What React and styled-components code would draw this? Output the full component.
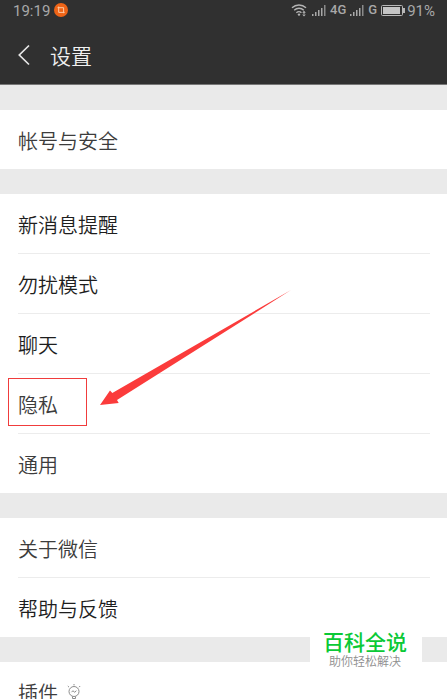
import React from "react";
import styled, { createGlobalStyle } from "styled-components";

const App = () => {
  return (
    <>
      <GlobalStyle />
      <Page>
        <Header>
          <StatusBar>
            <Time>19:19</Time>
            <CropBadge />
            <StatusIcons>
              <WifiIcon />
              <SignalIcon />
              <Network>4G</Network>
              <SignalIcon />
              <Network>G</Network>
              <BatteryIcon />
              <Percent>91%</Percent>
            </StatusIcons>
          </StatusBar>
          <TitleBar>
            <BackButton type="button" aria-label="返回">
              <svg width="12" height="22" viewBox="0 0 12 22" fill="none">
                <path d="M11 1.5L1.3 11L11 20.5" stroke="#e6e6e6" strokeWidth="1.7" />
              </svg>
            </BackButton>
            <h1>设置</h1>
          </TitleBar>
        </Header>

        <Main>
          <Group>
            <Row $tone="soft">
              <a href="#account">帐号与安全</a>
            </Row>
          </Group>
          <Group>
            <Row>
              <a href="#notice">新消息提醒</a>
            </Row>
            <Row>
              <a href="#disturb">勿扰模式</a>
            </Row>
            <Row>
              <a href="#chat">聊天</a>
            </Row>
            <Row $tone="soft">
              <a href="#privacy">隐私</a>
              <Highlight />
              <Pointer width="192" height="118" viewBox="0 0 192 118" aria-hidden="true">
                <path
                  d="M0 115L10 100.5L12.3 103L191 0L17 110L18.7 113Z"
                  fill="#fb3b3b"
                />
              </Pointer>
            </Row>
            <Row $tone="soft">
              <a href="#general">通用</a>
            </Row>
          </Group>
          <Group>
            <Row $tone="soft">
              <a href="#about">关于微信</a>
            </Row>
            <Row>
              <a href="#help">帮助与反馈</a>
            </Row>
          </Group>
          <Group>
            <Row $tone="soft">
              <a href="#plugins">
                插件
                <BulbIcon />
              </a>
            </Row>
          </Group>
        </Main>

        <Watermark>
          <strong>百科全说</strong>
          <span>助你轻松解决</span>
        </Watermark>
      </Page>
    </>
  );
};
export default App;

const CropBadge = () => (
  <svg width="14" height="14" viewBox="0 0 14 14" fill="none" aria-hidden="true">
    <circle cx="7" cy="7" r="7" fill="#ee6417" />
    <path d="M3.5 4.7H9.6V10.2M4.7 3.5V9.4H10.6" stroke="#fbc9a4" />
  </svg>
);

const WifiIcon = () => (
  <svg width="17" height="14" viewBox="0 0 17 14" fill="none" aria-hidden="true">
    <path
      d="M1 4.8C5 1 11 1 15 4.8M3.2 7.3C6 4.6 10 4.6 12.8 7.3M5.4 9.7C7 8.2 9 8.2 10.4 9.7"
      stroke="#b4b4b4"
      strokeWidth="1.4"
    />
    <circle cx="8" cy="11.6" r="1.2" fill="#b4b4b4" />
    <path d="M11.2 9.8L13 7.8L14.8 9.8ZM11.2 11.5L13 13.5L14.8 11.5ZM12.5 9H13.5V12H12.5Z" fill="#b4b4b4" />
  </svg>
);

const SignalIcon = () => (
  <svg width="14" height="12" viewBox="0 -1 14 12" aria-hidden="true">
    <path d="M0 9h1.5v2H0zM3 7h1.5v4H3zM6 5h1.5v6H6zM9 3h1.5v8H9z" fill="#a8a8a8" />
    <path d="M12 0h1.5v11h-1.5z" fill="#8a8a8a" />
  </svg>
);

const BatteryIcon = () => (
  <svg width="24" height="11" viewBox="0 0 24 11" aria-hidden="true">
    <rect x="0.5" y="0.5" width="21" height="10" rx="1" fill="none" stroke="#b8b8b8" />
    <rect x="2" y="2" width="17" height="7" fill="#c4c4c4" />
    <rect x="22" y="3" width="2" height="5" fill="#b8b8b8" />
  </svg>
);

const BulbIcon = () => (
  <svg width="14" height="18" viewBox="0 0 14 18" fill="none" stroke="#8c8c8c" aria-hidden="true">
    <circle cx="7" cy="7.5" r="5" />
    <path d="M4.5 8.2L6 6.7L7.5 8.3L9.4 6.7M5.5 12.5V14.5H8.5V12.5M7 0V1.4M0.8 2L2 3.2M13.2 2L12 3.2" />
  </svg>
);

const GlobalStyle = createGlobalStyle`
  * {
    box-sizing: border-box;
  }
  body {
    margin: 0;
    background: #eaeaea;
    font-family: "Noto Sans CJK SC", sans-serif;
  }
`;

const Page = styled.div`
  position: relative;
  height: 100vh;
  overflow: hidden;
`;

const Header = styled.header`
  background: #303030;
  border-bottom: 1px solid #777777;
`;

const StatusBar = styled.div`
  display: flex;
  align-items: center;
  height: 20px;
  padding: 0 12px 0 13px;
  color: #a8a8a8;
  font-family: Roboto, sans-serif;
  font-size: 15px;
  line-height: 20px;
`;

const Time = styled.span`
  margin-right: 4px;
  padding-top: 2px;
`;

const StatusIcons = styled.div`
  display: flex;
  align-items: center;
  gap: 4px;
  margin-left: auto;
`;

const Network = styled.span`
  font-size: 13px;
  font-weight: 500;
`;

const Percent = styled.span`
  padding-top: 2px;
  margin-left: -2px;
`;

const TitleBar = styled.div`
  display: flex;
  align-items: center;
  gap: 20px;
  height: 64px;
  padding: 6px 18px 0;
  h1 {
    margin: 0;
    color: #f0f0f0;
    font-size: 21px;
    font-weight: 350;
    line-height: 30px;
  }
`;

const BackButton = styled.button`
  display: flex;
  padding: 0;
  border: 0;
  background: transparent;
`;

const Main = styled.main`
  display: flex;
  flex-direction: column;
  gap: 25px;
  padding-top: 25px;
`;

const Group = styled.ul`
  margin: 0;
  padding: 0 17px 0 18px;
  background: #ffffff;
  list-style: none;
`;

const Row = styled.li`
  position: relative;
  a {
    display: flex;
    align-items: center;
    gap: 9px;
    height: 59px;
    padding-top: 2px;
    color: ${({ $tone }) => ($tone === "soft" ? "#3c3c3c" : "#1e1e1e")};
    font-size: 20px;
    font-weight: 350;
    line-height: 30px;
    text-decoration: none;
  }
  & + & {
    border-top: 1px solid #ececec;
  }
`;

const Highlight = styled.div`
  position: absolute;
  top: 4px;
  left: -10px;
  width: 79px;
  height: 48px;
  border: 1px solid #f03c3c;
  pointer-events: none;
`;

const Pointer = styled.svg`
  position: absolute;
  left: 82px;
  bottom: 25px;
  z-index: 1;
  pointer-events: none;
`;

const Watermark = styled.aside`
  position: absolute;
  right: 25px;
  bottom: 24px;
  display: flex;
  flex-direction: column;
  align-items: center;
  width: 112px;
  padding: 0 2px 6px 0;
  background: #ffffff;
  strong {
    color: #0bc936;
    font-size: 21px;
    font-weight: 500;
    line-height: 24px;
  }
  span {
    color: #8e8e8e;
    font-size: 12px;
    font-weight: 350;
    line-height: 16px;
  }
`;
